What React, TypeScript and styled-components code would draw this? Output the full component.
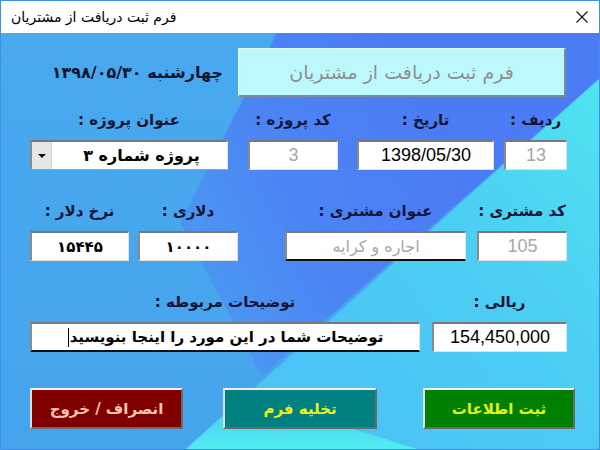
import React from "react";
import styled, { createGlobalStyle } from "styled-components";

const GlobalStyle = createGlobalStyle`
  html, body {
    margin: 0;
    padding: 0;
  }
  body {
    width: 600px;
    height: 450px;
    overflow: hidden;
    background: #fff;
  }
`;

const Window = styled.div`
  width: 600px;
  height: 450px;
  box-sizing: border-box;
  border: 1px solid #3b8fe4;
  display: flex;
  flex-direction: column;
  font-family: "DejaVu Sans", sans-serif;
`;

const TitleBar = styled.div`
  height: 32px;
  flex: none;
  background: #fff;
  display: flex;
  align-items: center;
  justify-content: space-between;
  padding: 0 11px 0 10px;
`;

const Title = styled.span`
  direction: rtl;
  font-size: 14px;
  color: #000;
`;

const Client = styled.div`
  position: relative;
  flex: 1;
  overflow: hidden;
`;

const Wallpaper = styled.svg`
  position: absolute;
  inset: 0;
  width: 100%;
  height: 100%;
  z-index: 0;
`;

const Body = styled.div`
  position: relative;
  z-index: 1;
  direction: rtl;
  display: flex;
  flex-direction: column;
  padding-top: 15px;
`;

const HeaderRow = styled.div`
  display: flex;
  align-items: center;
  gap: 15px;
  height: 49px;
  padding-right: 33px;
`;

const Banner = styled.div`
  width: 328px;
  height: 49px;
  box-sizing: border-box;
  background: #bdf8fc;
  border-top: 1px solid #e2ffff;
  border-left: 1px solid #e2ffff;
  border-right: 2px solid #7c8b9a;
  border-bottom: 2px solid #7c8b9a;
  display: flex;
  align-items: center;
  justify-content: center;
  font-size: 19px;
  color: #8e8f90;
`;

const DateText = styled.div`
  font-size: 16px;
  font-weight: bold;
  color: #15152e;
  white-space: nowrap;
`;

const Row = styled.div<{ $top: number; $right?: number }>`
  display: flex;
  align-items: flex-start;
  margin-top: ${(p) => p.$top}px;
  padding-right: ${(p) => p.$right ?? 32}px;
`;

const Field = styled.div<{ $w: number; $before?: number }>`
  display: flex;
  flex-direction: column;
  align-items: center;
  gap: 10px;
  width: ${(p) => p.$w}px;
  margin-right: ${(p) => p.$before ?? 0}px;
`;

const Label = styled.div`
  height: 20px;
  line-height: 20px;
  font-size: 15px;
  font-weight: bold;
  color: #161634;
  white-space: nowrap;
`;

const Box = styled.div<{
  $muted?: boolean;
  $latin?: boolean;
  $under?: boolean;
  $bold?: boolean;
  $size?: number;
  $spread?: number;
}>`
  width: 100%;
  height: 30px;
  box-sizing: border-box;
  background: #fff;
  border-top: 2px solid #787878;
  border-left: 2px solid #8a8a8a;
  border-right: 1px solid #e2e2e2;
  border-bottom: ${(p) => (p.$under ? "2px solid #101010" : "1px solid #e2e2e2")};
  display: flex;
  align-items: center;
  justify-content: center;
  font-family: ${(p) =>
    p.$latin ? '"Liberation Sans", "DejaVu Sans", sans-serif' : '"DejaVu Sans", sans-serif'};
  font-size: ${(p) => p.$size ?? (p.$latin ? 18 : 16)}px;
  font-weight: ${(p) => (p.$bold ? "bold" : "normal")};
  letter-spacing: ${(p) => p.$spread ?? 0}px;
  color: ${(p) => (p.$muted ? "#a7a7a7" : "#000")};
  white-space: nowrap;
  overflow: hidden;
`;

const ComboBox = styled(Box)`
  justify-content: space-between;
  align-items: stretch;
  border-bottom: 1px solid #7aa6e0;
`;

const ComboText = styled.div`
  flex: 1;
  display: flex;
  align-items: center;
  justify-content: center;
  padding-left: 4px;
`;

const DropButton = styled.div`
  width: 19px;
  flex: none;
  background: #e6e6e6;
  border-right: 1px solid #d0d0d0;
  display: flex;
  align-items: center;
  justify-content: center;

  &::after {
    content: "";
    border-left: 4px solid transparent;
    border-right: 4px solid transparent;
    border-top: 4px solid #111;
  }
`;

const Caret = styled.span`
  width: 1px;
  height: 19px;
  margin-right: 1px;
  background: #000;
  flex: none;
`;

const Button = styled.div<{ $bg: string; $fg: string; $w: number; $before?: number }>`
  width: ${(p) => p.$w}px;
  height: 41px;
  margin-right: ${(p) => p.$before ?? 0}px;
  box-sizing: border-box;
  background: ${(p) => p.$bg};
  border-top: 2px solid #f0f0f0;
  border-left: 2px solid #dedede;
  border-right: 2px solid #6a6a6a;
  border-bottom: 2px solid #6a6a6a;
  display: flex;
  align-items: center;
  justify-content: center;
  font-size: 15px;
  font-weight: bold;
  color: ${(p) => p.$fg};
  white-space: nowrap;
`;

const CloseIcon = () => (
  <svg width="12" height="12" viewBox="0 0 12 12">
    <path d="M0.5 0.5 L11.5 11.5 M11.5 0.5 L0.5 11.5" stroke="#111" strokeWidth="1.1" />
  </svg>
);

const Background = () => (
  <Wallpaper viewBox="1 33 598 416" preserveAspectRatio="none">
    <defs>
      <linearGradient id="lb" x1="0" y1="33" x2="0" y2="450" gradientUnits="userSpaceOnUse">
        <stop offset="0" stopColor="#48a9ef" />
        <stop offset="1" stopColor="#46a4ed" />
      </linearGradient>
      <linearGradient id="db" x1="190" y1="220" x2="420" y2="110" gradientUnits="userSpaceOnUse">
        <stop offset="0" stopColor="#4b95f2" />
        <stop offset="0.4" stopColor="#4b85f4" />
        <stop offset="1" stopColor="#4c7cf5" />
      </linearGradient>
      <linearGradient id="cy" x1="300" y1="360" x2="600" y2="90" gradientUnits="userSpaceOnUse">
        <stop offset="0" stopColor="#4bc3f5" />
        <stop offset="0.55" stopColor="#4ccff4" />
        <stop offset="1" stopColor="#4fe4ef" />
      </linearGradient>
      <linearGradient id="glow" x1="0" y1="395" x2="0" y2="450" gradientUnits="userSpaceOnUse">
        <stop offset="0" stopColor="#50eef0" stopOpacity="0" />
        <stop offset="1" stopColor="#50eef0" stopOpacity="1" />
      </linearGradient>
    </defs>
    <rect x="0" y="33" width="600" height="417" fill="url(#lb)" />
    <polygon points="277,33 600,33 600,78 262,376 180,222" fill="url(#db)" />
    <polygon points="600,78 600,450 185,450" fill="url(#cy)" />
    <polygon points="185,450 245,395 420,450" fill="url(#glow)" />
  </Wallpaper>
);

export default function App() {
  return (
    <>
      <GlobalStyle />
      <Window>
        <TitleBar>
          <Title>فرم ثبت دریافت از مشتریان</Title>
          <CloseIcon />
        </TitleBar>
        <Client>
          <Background />
          <Body>
            <HeaderRow>
              <Banner>فرم ثبت دریافت از مشتریان</Banner>
              <DateText>چهارشنبه ۱۳۹۸/۰۵/۳۰</DateText>
            </HeaderRow>

            <Row $top={13}>
              <Field $w={63}>
                <Label>ردیف :</Label>
                <Box $latin $muted>13</Box>
              </Field>
              <Field $w={137} $before={10}>
                <Label>تاریخ :</Label>
                <Box $latin>1398/05/30</Box>
              </Field>
              <Field $w={90} $before={19}>
                <Label>کد پروژه :</Label>
                <Box $latin $muted>3</Box>
              </Field>
              <Field $w={198} $before={20}>
                <Label>عنوان پروژه :</Label>
                <ComboBox $bold $size={16}>
                  <ComboText>پروژه شماره ۳</ComboText>
                  <DropButton />
                </ComboBox>
              </Field>
            </Row>

            <Row $top={31}>
              <Field $w={90}>
                <Label>کد مشتری :</Label>
                <Box $latin $muted>105</Box>
              </Field>
              <Field $w={181} $before={11}>
                <Label>عنوان مشتری :</Label>
                <Box $muted $under>اجاره و کرایه</Box>
              </Field>
              <Field $w={100} $before={47}>
                <Label>دلاری :</Label>
                <Box $bold $size={15} $spread={2}>۱۰۰۰۰</Box>
              </Field>
              <Field $w={99} $before={9}>
                <Label>نرخ دلار :</Label>
                <Box $bold $size={15} $spread={2}>۱۵۴۴۵</Box>
              </Field>
            </Row>

            <Row $top={31}>
              <Field $w={135}>
                <Label>ریالی :</Label>
                <Box $latin>154,450,000</Box>
              </Field>
              <Field $w={390} $before={12}>
                <Label>توضیحات مربوطه :</Label>
                <Box $bold $under $size={15}>
                  توضیحات شما در این مورد را اینجا بنویسید
                  <Caret />
                </Box>
              </Field>
            </Row>

            <Row $top={36} $right={24}>
              <Button $w={152} $bg="#008000" $fg="#e4f21a">
                ثبت اطلاعات
              </Button>
              <Button $w={154} $before={46} $bg="#008080" $fg="#eef21a">
                تخلیه فرم
              </Button>
              <Button $w={153} $before={40} $bg="#800000" $fg="#ffc6b2">
                انصراف / خروج
              </Button>
            </Row>
          </Body>
        </Client>
      </Window>
    </>
  );
}
